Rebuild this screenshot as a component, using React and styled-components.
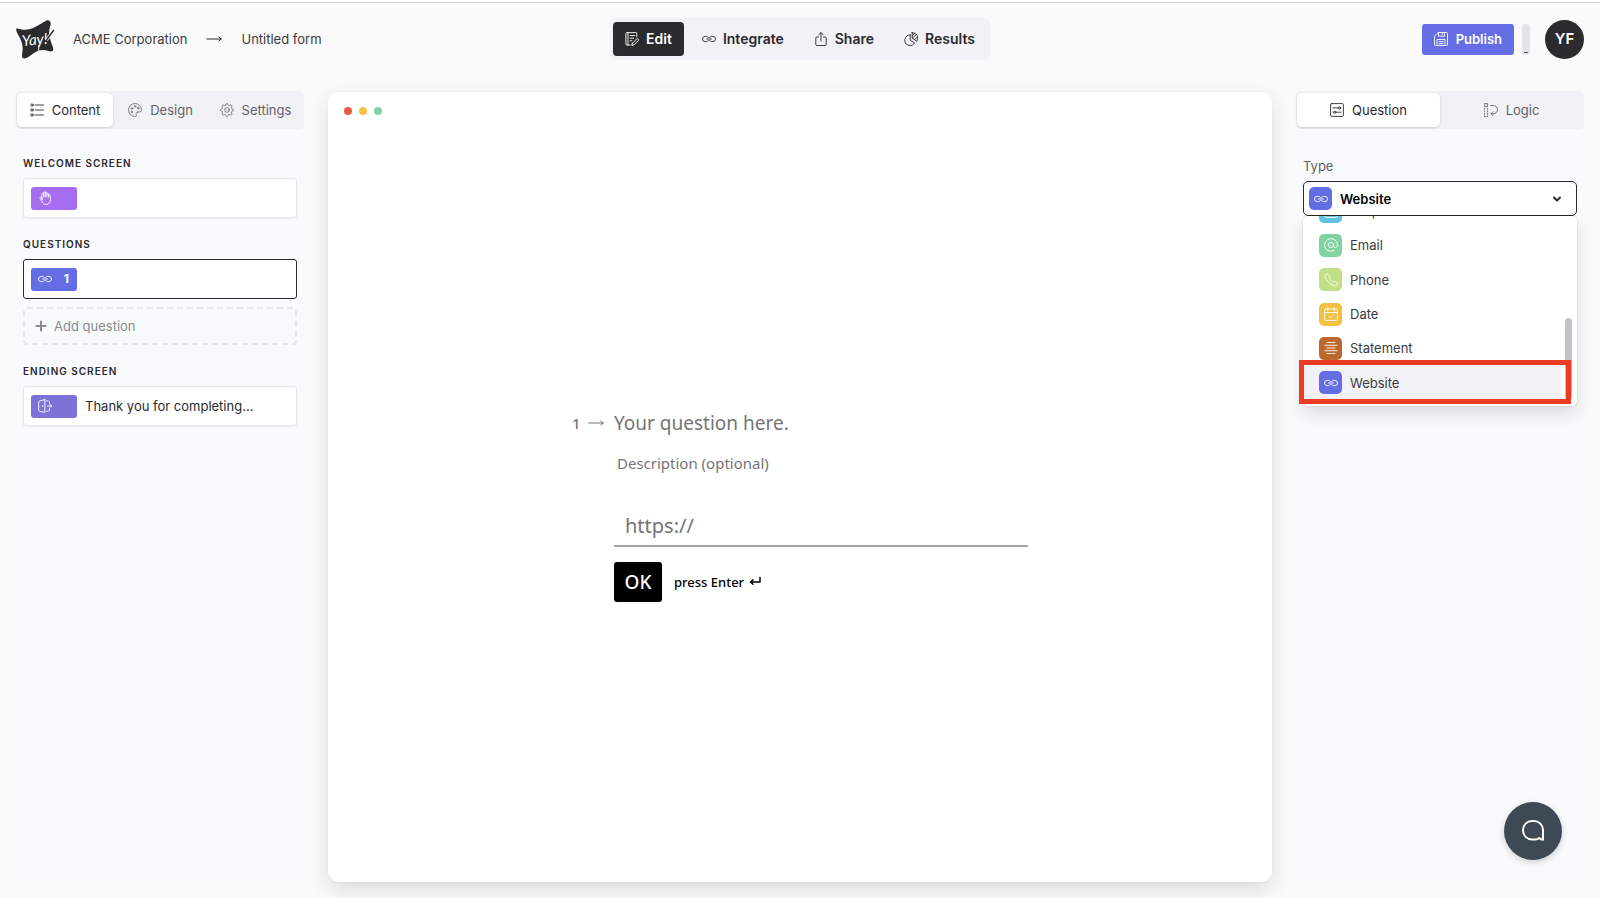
import React from "react";
import styled, { createGlobalStyle, css } from "styled-components";

const GlobalStyle = createGlobalStyle`
  *, *::before, *::after { box-sizing: border-box; }
  body {
    margin: 0;
    background: #fafafa;
    color: #2b2b2d;
    font: 400 13px/20px Inter, "Liberation Sans", sans-serif;
  }
  button, input, select { font: inherit; color: inherit; }
  h1, h2, ul { margin: 0; padding: 0; font: inherit; list-style: none; }
  svg { display: block; flex: none; }
`;

/* ---------- icons ---------- */

const Stroke = styled.svg.attrs((p) => ({
  viewBox: p.viewBox || "0 0 14 14",
  fill: "none",
  stroke: "currentColor",
  strokeLinecap: "round",
  strokeLinejoin: "round",
  "aria-hidden": true,
}))`
  width: ${(p) => p.$size || 14}px;
  height: ${(p) => p.$size || 14}px;
  stroke-width: ${(p) => p.$weight || 0.9};
`;

const shapes = {
  list: (
    <>
      <circle cx="2" cy="2" r="1.2" />
      <circle cx="2" cy="7" r="1.2" />
      <circle cx="2" cy="12" r="1.2" />
      <path d="M5 2h8.5M5 7h8.5M5 12h8.5" />
    </>
  ),
  palette: (
    <>
      <path d="M9.6 9.2c1.5-.3 3.900.3 3.900-2.200A6.500 6.500 0 1 0 7.600 13.500c1.300-.1 1-1.300.6-2-.5-1 .2-2.100 1.400-2.300Z" />
      <circle cx="4" cy="5.400" r=".8" />
      <circle cx="7" cy="3.300" r=".8" />
      <circle cx="10.200" cy="5" r=".8" />
      <circle cx="3.700" cy="8.800" r=".8" />
    </>
  ),
  gear: (
    <>
      <circle cx="7" cy="7" r="2.300" />
      <path d="m5.700 2.100.4-1.100c.3-.7 1.500-.7 1.800 0l.4 1.100c.2.500.7.700 1.200.5l1.100-.5c.8-.3 1.600.5 1.300 1.300l-.5 1.100c-.2.500 0 1 .5 1.200l1.100.4c.7.300.7 1.500 0 1.800l-1.100.4c-.5.200-.7.700-.5 1.200l.5 1.100c.3.800-.5 1.600-1.300 1.300l-1.100-.5c-.5-.2-1 0-1.200.5L7.900 13c-.3.700-1.500.7-1.800 0l-.4-1.100c-.2-.5-.7-.7-1.200-.5l-1.100.5c-.8.300-1.600-.5-1.300-1.300l.5-1.100c.2-.5 0-1-.5-1.200L1 7.900c-.7-.3-.7-1.500 0-1.800l1.100-.4c.5-.2.7-.7.5-1.200l-.5-1.100c-.3-.8.500-1.600 1.300-1.300l1.100.5c.5.200 1 0 1.200-.5Z" />
    </>
  ),
  edit: (
    <>
      <path d="M11.800 5V1.500a.9.900 0 0 0-.9-.9H1.900a1 1 0 0 0-1 1v10.400a1 1 0 0 0 1 1h3.300" />
      <path d="M3 .6v12.400M5.200 3.600h4.600M5.200 6.200h3.400M5.200 8.800h1.600" />
      <path d="m7.400 11.300 4.300-4.300c.9-.9 2.500.7 1.600 1.600L9 12.900l-2.200.6.600-2.200Z" />
    </>
  ),
  link: (
    <>
      <path d="M6.400 8.500A2.200 2.200 0 0 1 4.600 9.600H3.100a2.600 2.600 0 0 1 0-5.200h1.500a2.200 2.200 0 0 1 1.800 1.100" />
      <path d="M7.600 5.500a2.200 2.200 0 0 1 1.800-1.100h1.500a2.600 2.600 0 0 1 0 5.200H9.400a2.200 2.200 0 0 1-1.800-1.100" />
      <path d="M4.600 7h4.800" />
    </>
  ),
  share: (
    <>
      <path d="M4.500 5H2.800a1 1 0 0 0-1 1v6.500a1 1 0 0 0 1 1h8.400a1 1 0 0 0 1-1V6a1 1 0 0 0-1-1H9.500" />
      <path d="M7 9V.6M4.800 2.800 7 .6l2.200 2.200" />
    </>
  ),
  pie: (
    <>
      <path d="M6.200 3a5.300 5.300 0 1 0 4.500 8L6.200 8.200V3Z" />
      <path d="M8.200.6v5.600l4.600 3A5.400 5.400 0 0 0 8.200.6Z" />
      <path d="m8.500 6 4-3.500M8.300 3.700l2-2M10.500 7.400l2.700-2" />
    </>
  ),
  save: (
    <>
      <path d="M13.500 12.500a1 1 0 0 1-1 1h-11a1 1 0 0 1-1-1V4.200L4.200.5h8.300a1 1 0 0 1 1 1Z" />
      <path d="M4.500.6v3.600h6V.6M8.300 1.200v1.500M3 13.400V7.500h8v5.900M5 9.600h4M5 11.600h4" />
    </>
  ),
  hand: (
    <>
      <path d="M3.800 8V3.200c0-1.200 1.700-1.200 1.700 0V6M5.500 5.800V1.700c0-1.200 1.800-1.200 1.800 0v4M7.300 5.600V2c0-1.200 1.700-1.200 1.700 0v3.900M9 3.300c0-1.200 1.700-1.100 1.700 0v1.200c0-1.200 1.700-1.100 1.700.1v4.200c0 2.700-1.500 4.600-4.100 4.600-2.300 0-3.300-.9-4.300-2.700L2 7.500c-.5-1.100.9-1.700 1.500-.8L4.800 9" />
      <path d="M10.700 4v2.300" />
    </>
  ),
  door: (
    <>
      <path d="M6.800.6 1.500 1.900a1 1 0 0 0-.8 1v8.300a1 1 0 0 0 .8 1l5.300 1.200V.6Z" />
      <path d="M8.500 1.900h1M11.400 3v1.300M8.500 12.200h1M11.400 11V9.700M10.900 1.900a.6.600 0 0 1 .5.500M10.900 12.200a.6.600 0 0 0 .5-.5M9.300 7h4.200M12 5.400 13.500 7 12 8.600M4.600 6.500v1" />
    </>
  ),
  sliders: (
    <>
      <rect x=".6" y=".6" width="12.800" height="12.800" rx="1" />
      <path d="M3 4.900h5.200M10.500 4.900H11M3 9.200h.5M6 9.200h5" />
      <circle cx="9.300" cy="4.900" r="1.100" />
      <circle cx="4.800" cy="9.200" r="1.100" />
    </>
  ),
  logic: (
    <>
      <rect x=".6" y=".6" width="3" height="3" />
      <path d="M.6 5.500v8M3.600 5.500v8M.6 13.400h3" strokeDasharray="1 1.500" />
      <path d="M6.500 2.500h2.800a4 4 0 0 1 0 8.300H7.200M9 8.800l-2 2 2 2" />
    </>
  ),
  at: (
    <>
      <circle cx="7" cy="7" r="2.600" />
      <path d="M9.600 7v1c0 2.300 3.800 2 3.800-1A6.400 6.400 0 1 0 10.300 12.500" />
    </>
  ),
  phone: (
    <path d="m8.700 12.600c1.300.8 3 .6 4-.5l.4-.4a1.200 1.200 0 0 0 0-1.600l-1.500-1.500a1.200 1.200 0 0 0-1.700 0c-.4.500-1.200.5-1.700 0L5.500 6c-.5-.5-.5-1.200 0-1.700.5-.5.5-1.200 0-1.700L4 1.100a1.200 1.200 0 0 0-1.700 0l-.4.400C.800 2.500.6 4.200 1.400 5.500a25 25 0 0 0 7.300 7.100Z" />
  ),
  calendar: (
    <>
      <rect x=".6" y="2" width="12.800" height="11.400" rx="1" />
      <path d="M.6 5.500h12.800M3.800.6v3M10.200.6v3M5 9.500l1.400 1.400L9.200 8" />
    </>
  ),
  lines: <path d="M3 1.500h8M.8 4.300h12.400M3 7h8M.8 9.700h12.400M3 12.500h8" />,
  plus: <path d="M7 2.500v9M2.500 7h9" />,
  box: (
    <>
      <rect x=".6" y=".6" width="12.800" height="12.800" rx="2" />
      <path d="M4 6.500h6L7 9.500Z" />
    </>
  ),
  chevron: <path d="M4 5.500 7 8.500l3-3" />,
};

const Icon = ({ name, size, weight }) => (
  <Stroke $size={size} $weight={weight}>
    {shapes[name]}
  </Stroke>
);

const Arrow = () => (
  <Stroke as="svg" viewBox="0 0 16 16" $size={16} $weight={1}>
    <path d="M.8 8h14.400M12.800 6 15.200 8l-2.400 2" />
  </Stroke>
);

const Logo = () => (
  <svg width="38" height="39" viewBox="0 0 38 39" role="img" aria-label="Yay! Forms">
    <path
      d="M1.500 8.500C8 10.500 13 10.500 20 6.500c4-2.300 7-4.200 10-5.800C33-.8 35.500 1.500 34.500 5c-1.500 5.500-2 8.500-.5 13.500 1 4 2.500 7 3.200 10 .6 3-2 3.500-4.500 2.500-6-2-10.700-1-15.500 2.500-3 2-6 5-9 5-2.800 0-2.300-3.500-1.800-6.500C7.300 25.500 5.800 21 2.800 16 .8 13-1.200 7.700 1.500 8.500Z"
      fill="#2b2b2d"
    />
    <path d="m22.800 25-.3 9" stroke="#fafafa" strokeWidth="1" />
    <path d="m37.500 10.500-7 9.500" stroke="#fafafa" strokeWidth="3" />
    <path d="m37.500 10.500-7 9.500" stroke="#2b2b2d" strokeWidth="1.500" strokeLinecap="round" />
    <text
      x="6"
      y="25"
      fill="#fff"
      fontFamily="Lato, sans-serif"
      fontStyle="italic"
      fontSize="15"
      transform="rotate(-6 18 22)"
    >
      Yay!
    </text>
  </svg>
);

/* ---------- shell ---------- */

const Page = styled.div`
  display: flex;
  flex-direction: column;
  min-height: 100vh;
  border-top: 2px solid #fff;
`;

const Header = styled.header`
  display: grid;
  grid-template-columns: 1fr auto 1fr;
  align-items: center;
  padding: 15px 16px 31px;
  border-top: 1px solid #cfcfcf;
`;

const Crumbs = styled.nav`
  display: flex;
  align-items: center;
  gap: 19px;
`;

const Crumb = styled.a`
  color: #3b3b3e;
  text-decoration: none;
`;

const ModeNav = styled.nav`
  display: flex;
  gap: 6px;
  padding: 4px 3px;
  border-radius: 6px;
  background: #f2f1f6;
`;

const Mode = styled.button`
  display: flex;
  align-items: center;
  gap: 7px;
  height: 34px;
  padding: 0 12px;
  border: 0;
  border-radius: 4px;
  background: ${(p) => (p.$active ? "#2b2b2d" : "transparent")};
  color: ${(p) => (p.$active ? "#fff" : "#2b2b2d")};
  font-weight: 600;
  font-size: 14px;
`;

const Actions = styled.div`
  display: flex;
  align-items: center;
  justify-content: flex-end;
`;

const Publish = styled.button`
  display: flex;
  align-items: center;
  gap: 8px;
  height: 31px;
  padding: 0 12px;
  border: 0;
  border-radius: 3px;
  background: #646de4;
  color: #fff;
  font-weight: 600;
`;

const Status = styled.span`
  display: flex;
  align-items: flex-end;
  justify-content: center;
  width: 8px;
  height: 31px;
  margin: 0 15px 0 8px;
  padding-bottom: 2px;
  border-radius: 3px;
  background: #e4e4e8;

  &::after {
    content: "";
    width: 4px;
    height: 1px;
    background: #4b4b4f;
  }
`;

const Avatar = styled.button`
  width: 39px;
  height: 39px;
  padding: 0;
  border: 0;
  border-radius: 50%;
  background: #2b2b2d;
  color: #fff;
  font-weight: 600;
  font-size: 15px;
`;

const Workspace = styled.div`
  flex: 1;
  display: grid;
  grid-template-columns: 288px 1fr 288px;
  gap: 24px;
  padding: 0 16px 16px;
`;

const Panel = styled.aside`
  display: flex;
  flex-direction: column;
`;

const PanelBody = styled.div`
  flex: 1;
  padding: ${(p) => p.$top}px 7px 0;
  background: #f9fafb;
`;

const Tabs = styled.div`
  display: grid;
  grid-template-columns: ${(p) => p.$columns};
  padding: 2px 1px;
  border-radius: 5px;
  background: #f2f1f6;
`;

const Tab = styled.button`
  display: flex;
  align-items: center;
  justify-content: center;
  gap: 8px;
  height: 34px;
  padding: 0;
  border: 0;
  border-radius: 5px;
  background: transparent;
  color: #636366;
  ${(p) =>
    p.$active &&
    css`
      background: #fff;
      color: #2b2b2d;
      box-shadow: 0 1px 3px rgba(0, 0, 0, 0.16);
    `}
`;

/* ---------- left panel ---------- */

const Section = styled.section`
  margin-bottom: 18px;
`;

const SectionTitle = styled.h2`
  margin-bottom: 7px;
  font-size: 10px;
  font-weight: 600;
  line-height: 16px;
  letter-spacing: 1px;
  text-transform: uppercase;
`;

const Block = styled.button`
  display: flex;
  align-items: center;
  gap: 8px;
  width: 100%;
  height: 40px;
  padding: 0 7px;
  border: 1px solid ${(p) => (p.$active ? "#2b2b2d" : "#e5e5ea")};
  border-radius: 3px;
  background: #fff;
  box-shadow: ${(p) => (p.$active ? "none" : "0 1px 2px rgba(0, 0, 0, 0.06)")};
`;

const Badge = styled.span`
  display: flex;
  align-items: center;
  justify-content: space-between;
  width: 46px;
  height: 23px;
  padding: 0 8px 0 7px;
  border-radius: 3px;
  background: ${(p) => p.$color};
  color: #fff;
  font-size: 12px;
  font-weight: 700;
`;

const AddQuestion = styled.button`
  display: flex;
  align-items: center;
  gap: 6px;
  width: 100%;
  height: 38px;
  margin-top: 8px;
  padding: 0 9px;
  border: 2px dashed #e5e5ea;
  border-radius: 4px;
  background: transparent;
  color: #8a8a8e;
`;

/* ---------- canvas ---------- */

const Canvas = styled.main`
  display: flex;
  flex-direction: column;
  margin-top: 1px;
  border-radius: 10px;
  background: #fff;
  box-shadow: 0 0 2px rgba(0, 0, 0, 0.06), 0 8px 20px rgba(0, 0, 0, 0.12);
`;

const Dots = styled.div`
  display: flex;
  gap: 7px;
  padding: 15px 16px;
`;

const Dot = styled.span`
  width: 8px;
  height: 8px;
  border-radius: 50%;
  background: ${(p) => p.$color};
`;

const FormArea = styled.div`
  flex: 1;
  display: flex;
  align-items: center;
  justify-content: center;
  font-family: "Noto Sans", "Open Sans", sans-serif;
`;

const Form = styled.form`
  display: grid;
  grid-template-columns: 42px 414px;
`;

const Number = styled.span`
  display: flex;
  align-items: center;
  gap: 7px;
  color: #757575;
  font-size: 15px;
  font-weight: 500;
`;

const Question = styled.h1`
  color: #757575;
  font-size: 19px;
  line-height: 24px;
`;

const Fields = styled.div`
  grid-column: 2;
`;

const Description = styled.p`
  margin: 16px 0 31px;
  padding-left: 3px;
  color: #757575;
  font-size: 15px;
  line-height: 24px;
`;

const UrlInput = styled.input`
  display: block;
  width: 100%;
  height: 41px;
  padding: 0 11px;
  border: 0;
  border-bottom: 2px solid #a3a3a3;
  background: transparent;
  font-size: 20px;

  &::placeholder { color: #757575; opacity: 1; }
`;

const Submit = styled.div`
  display: flex;
  align-items: center;
  gap: 12px;
  margin-top: 15px;
  color: #000;
  font-size: 13px;
  font-weight: 500;
`;

const OkButton = styled.button`
  width: 48px;
  height: 40px;
  padding: 0;
  border: 0;
  border-radius: 3px;
  background: #000;
  color: #fff;
  font-size: 19px;
`;

const Hint = styled.span`
  display: flex;
  align-items: center;
  gap: 5px;
`;

/* ---------- right panel ---------- */

const FieldLabel = styled.label`
  display: block;
  margin-bottom: 5px;
  color: #636366;
`;

const Picker = styled.div`
  position: relative;
`;

const PickerBox = styled.div`
  display: flex;
  align-items: center;
  height: 35px;
  padding: 0 12px 0 5px;
  border: 1px solid #2b2b2d;
  border-radius: 5px;
  background: #fff;
`;

const TypeSelect = styled.select`
  flex: 1;
  padding: 0 0 0 8px;
  border: 0;
  outline: 0;
  appearance: none;
  background: transparent;
  color: #000;
  font-weight: 600;
`;

const TypeIcon = styled.span`
  display: flex;
  align-items: center;
  justify-content: center;
  width: 23px;
  height: 23px;
  border-radius: 5px;
  background: ${(p) => p.$color};
  color: #fff;
`;

const Menu = styled.div`
  position: absolute;
  inset: 100% 0 auto;
  display: flex;
  align-items: flex-end;
  height: 190px;
  padding: 0 5px 6px 1px;
  overflow: hidden;
  border-radius: 5px;
  background: #fff;
  box-shadow: 0 0 2px rgba(0, 0, 0, 0.2), 0 8px 16px rgba(0, 0, 0, 0.12);
`;

const Options = styled.ul`
  flex: 1;
  display: grid;
  grid-auto-rows: 1fr;
  height: 206px;
`;

const Option = styled.li`
  display: flex;
  align-items: center;
  gap: 8px;
  margin-right: 4px;
  padding-left: 15px;
  background: ${(p) => (p.$active ? "#f2f1f6" : "transparent")};
  color: #3b3b3e;
`;

const Thumb = styled.span`
  width: 7px;
  height: 82px;
  border-radius: 4px;
  background: #c3c3c7;
`;

const Highlight = styled.div`
  position: absolute;
  inset: 179px 6px auto -4px;
  height: 44px;
  border: 5px solid #ec3b23;
`;

const ChatButton = styled.button`
  position: fixed;
  right: 38px;
  bottom: 38px;
  display: flex;
  align-items: center;
  justify-content: center;
  width: 58px;
  height: 58px;
  padding: 0;
  border: 0;
  border-radius: 50%;
  background: #3d4a55;
  color: #fff;
  box-shadow: 0 2px 6px rgba(0, 0, 0, 0.18);
`;

const modes = [
  { icon: "edit", label: "Edit", active: true },
  { icon: "link", label: "Integrate" },
  { icon: "share", label: "Share" },
  { icon: "pie", label: "Results" },
];

const types = [
  { icon: "box", label: "Dropdown", color: "#62c4e4" },
  { icon: "at", label: "Email", color: "#81d4a2" },
  { icon: "phone", label: "Phone", color: "#c1df86" },
  { icon: "calendar", label: "Date", color: "#f2c043" },
  { icon: "lines", label: "Statement", color: "#be672d" },
  { icon: "link", label: "Website", color: "#646de4" },
];

export default function App() {
  return (
    <Page>
      <GlobalStyle />
      <Header>
        <Crumbs aria-label="Breadcrumb">
          <Logo />
          <Crumb href="#workspace">ACME Corporation</Crumb>
          <Arrow />
          <Crumb href="#form">Untitled form</Crumb>
        </Crumbs>
        <ModeNav aria-label="Form sections">
          {modes.map((m) => (
            <Mode key={m.label} $active={m.active}>
              <Icon name={m.icon} />
              {m.label}
            </Mode>
          ))}
        </ModeNav>
        <Actions>
          <Publish>
            <Icon name="save" />
            Publish
          </Publish>
          <Status />
          <Avatar>YF</Avatar>
        </Actions>
      </Header>

      <Workspace>
        <Panel>
          <Tabs $columns="96px 1fr 1fr" role="tablist">
            <Tab role="tab" aria-selected="true" $active>
              <Icon name="list" />
              Content
            </Tab>
            <Tab role="tab" aria-selected="false">
              <Icon name="palette" weight={0.8} />
              Design
            </Tab>
            <Tab role="tab" aria-selected="false">
              <Icon name="gear" weight={0.8} />
              Settings
            </Tab>
          </Tabs>
          <PanelBody $top={26}>
            <Section>
              <SectionTitle>Welcome screen</SectionTitle>
              <Block aria-label="Welcome screen">
                <Badge $color="#a76df0">
                  <Icon name="hand" />
                </Badge>
              </Block>
            </Section>
            <Section>
              <SectionTitle>Questions</SectionTitle>
              <Block $active>
                <Badge $color="#646de4">
                  <Icon name="link" />1
                </Badge>
              </Block>
              <AddQuestion>
                <Icon name="plus" weight={2} />
                Add question
              </AddQuestion>
            </Section>
            <Section>
              <SectionTitle>Ending screen</SectionTitle>
              <Block>
                <Badge $color="#7c71d6">
                  <Icon name="door" />
                </Badge>
                Thank you for completing...
              </Block>
            </Section>
          </PanelBody>
        </Panel>

        <Canvas>
          <Dots>
            <Dot $color="#e75a43" />
            <Dot $color="#f2c043" />
            <Dot $color="#81d4a2" />
          </Dots>
          <FormArea>
            <Form onSubmit={(e) => e.preventDefault()}>
              <Number>
                1 <Arrow />
              </Number>
              <Question>Your question here.</Question>
              <Fields>
                <Description>Description (optional)</Description>
                <UrlInput type="url" aria-label="Website address" placeholder="https://" />
                <Submit>
                  <OkButton>OK</OkButton>
                  <Hint>
                    press Enter
                    <Stroke viewBox="0 0 12 12" $size={12} $weight={1.5}>
                      <path d="M11 1.500v4.500H1.500M4 3.800 1.500 6 4 8.200" />
                    </Stroke>
                  </Hint>
                </Submit>
              </Fields>
            </Form>
          </FormArea>
        </Canvas>

        <Panel>
          <Tabs $columns="1fr 1fr" role="tablist">
            <Tab role="tab" aria-selected="true" $active>
              <Icon name="sliders" />
              Question
            </Tab>
            <Tab role="tab" aria-selected="false">
              <Icon name="logic" />
              Logic
            </Tab>
          </Tabs>
          <PanelBody $top={27}>
            <FieldLabel htmlFor="type">Type</FieldLabel>
            <Picker>
              <PickerBox>
                <TypeIcon $color="#646de4">
                  <Icon name="link" />
                </TypeIcon>
                <TypeSelect id="type" defaultValue="Website">
                  {types.map((t) => (
                    <option key={t.label}>{t.label}</option>
                  ))}
                </TypeSelect>
                <Icon name="chevron" weight={2} />
              </PickerBox>
              <Menu>
                <Options role="listbox" aria-label="Question types">
                  {types.map((t) => (
                    <Option
                      key={t.label}
                      role="option"
                      aria-selected={t.label === "Website"}
                      $active={t.label === "Website"}
                    >
                      <TypeIcon $color={t.color}>
                        <Icon name={t.icon} />
                      </TypeIcon>
                      {t.label}
                    </Option>
                  ))}
                </Options>
                <Thumb />
              </Menu>
              <Highlight />
            </Picker>
          </PanelBody>
        </Panel>
      </Workspace>

      <ChatButton aria-label="Open chat">
        <Stroke viewBox="0 0 24 24" $size={24} $weight={2}>
          <path d="M22 20.800v-9.800A9 9 0 0 0 13 2h-2a9 9 0 0 0-9 9v.5a9 9 0 0 0 9 9h3.500c1.500 0 2.800-.6 3.700-1.500 1 1 2.300 1.800 3.800 1.800Z" />
        </Stroke>
      </ChatButton>
    </Page>
  );
}
